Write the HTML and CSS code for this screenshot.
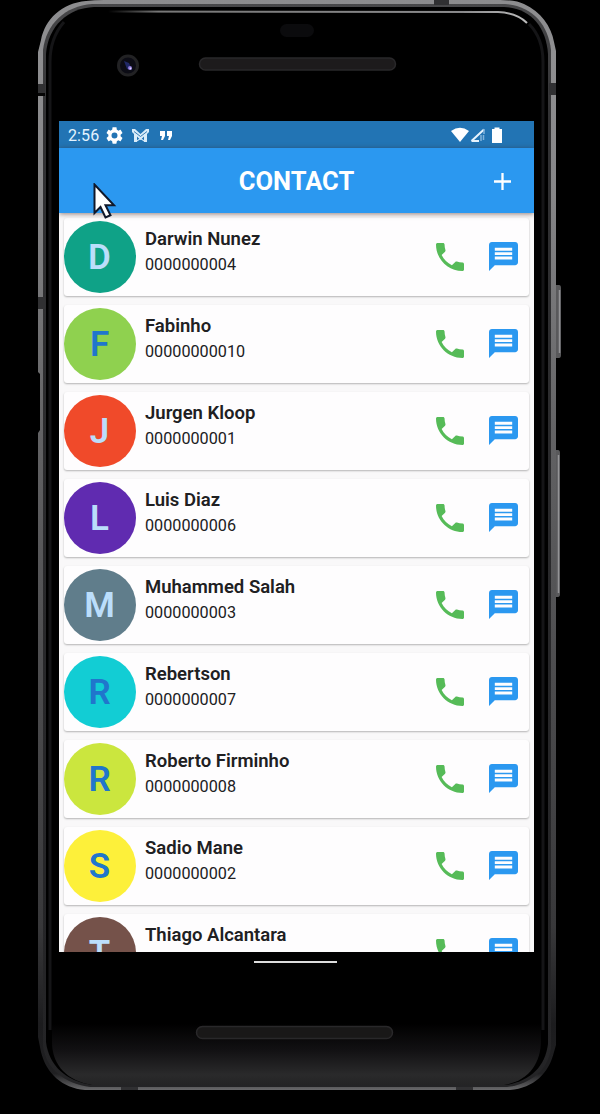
FILE: index.html
```html
<!DOCTYPE html>
<html lang="en">
<head>
<meta charset="utf-8">
<title>Contact</title>
<link rel="stylesheet" href="styles.css">
</head>
<body>
<svg class="sprites" width="0" height="0" aria-hidden="true">
  <symbol id="call" viewBox="3 3 18 18"><path d="M6.62 10.79c1.44 2.83 3.76 5.14 6.59 6.59l2.2-2.2c.27-.27.67-.36 1.02-.24 1.12.37 2.33.57 3.57.57.55 0 1 .45 1 1V20c0 .55-.45 1-1 1-9.39 0-17-7.61-17-17 0-.55.45-1 1-1h3.5c.55 0 1 .45 1 1 0 1.25.2 2.45.57 3.57.11.35.03.74-.25 1.02l-2.2 2.2z"/></symbol>
  <symbol id="message" viewBox="2 2 20 20"><path d="M20 2H4c-1.1 0-2 .9-2 2v18l4-4h14c1.1 0 2-.9 2-2V4c0-1.100-.9-2-2-2zm-2 12H6v-2h12v2zm0-3H6V9h12v2zm0-3H6V6h12v2z"/></symbol>
</svg>
<main class="phone">
  <svg class="frame" width="600" height="1114" viewBox="0 0 600 1114" aria-hidden="true">
    <defs>
      <linearGradient id="edge" x1="0" y1="0" x2="0" y2="1">
        <stop offset="0" stop-color="#8c8c8e"/><stop offset=".05" stop-color="#8f8f91"/><stop offset=".18" stop-color="#858587"/><stop offset=".4" stop-color="#626264"/><stop offset=".6" stop-color="#4e4e50"/><stop offset=".85" stop-color="#38383a"/><stop offset=".94" stop-color="#1c1c1e"/><stop offset=".985" stop-color="#202022"/><stop offset="1" stop-color="#68686a"/>
      </linearGradient>
      <linearGradient id="inner" x1="0" y1="0" x2="0" y2="1">
        <stop offset="0" stop-color="#48484a"/><stop offset=".1" stop-color="#323234"/><stop offset=".5" stop-color="#29292b"/><stop offset="1" stop-color="#242426"/>
      </linearGradient>
      <linearGradient id="chin" x1="0" y1="0" x2="0" y2="1">
        <stop offset="0" stop-color="#000"/><stop offset=".94" stop-color="#000"/><stop offset=".965" stop-color="#111012"/><stop offset=".99" stop-color="#2a2a2b"/><stop offset="1" stop-color="#242425"/>
      </linearGradient>
      <linearGradient id="shine" x1="0" y1="0" x2="1" y2="0">
        <stop offset="0" stop-color="#777" stop-opacity="0"/><stop offset=".12" stop-color="#777"/><stop offset=".85" stop-color="#8b8b8d"/><stop offset="1" stop-color="#bbb"/>
      </linearGradient>
    </defs>
    <path class="button" d="M555 285h4q2 0 2 3v67q0 3-2 3h-4zM554 450h4q2 0 2 3v141q0 3-2 3h-4z"/>
    <path class="button-light" d="M559.500 290v63M558.500 455v138"/>
    <path fill="url(#edge)" d="M38 52L41 40C45 19 62 3 86 1Q94 0 104 0H500Q516 0 524 4C541 12 551 26 554 42L556 51V1045L554 1052C549 1073 534 1088 510 1090H85C62 1088 46 1073 41 1052L38 1037V433L40 430V374L38 372Z"/>
    <path fill="url(#inner)" d="M43 50C46 24 65 6 92 4H505C532 6 548 24 551 50V1048C548 1070 531 1084 507 1087H90C65 1084 46 1069 43 1046Z"/>
    <path fill="#000" d="M46 54C48 26 68 8 94 7H504C530 8 546 26 548 54V1044C545 1067 530 1081 506 1085H92C66 1081 49 1066 46 1042Z"/>
    <path fill="none" stroke="#151517" stroke-width="3" d="M50 1030V62Q50 38 64 22M543 1030V62Q543 38 529 24"/>
    <path fill="url(#chin)" d="M52 60H541V1040C541 1064 528 1081 504 1085H92C68 1081 52 1066 52 1042Z"/>
    <path fill="none" stroke="url(#shine)" stroke-width="2" d="M108 11.500L498 12Q517 13 527 23"/>
    <path fill="#303032" d="M434 0h15v5h-15zM549 83h7v12h-7zM38 84h7v9h-7zM38 297h7v12h-7zM121 1087h17v3h-17zM456 1087h17v3h-17z"/>
    <path fill="#050505" d="M38 93h7v3h-7z"/>
    <rect x="280" y="24" width="34" height="13" rx="6.500" fill="#0b0b0d"/>
    <rect x="199.500" y="58" width="196" height="12" rx="6" fill="#1d1b1c" stroke="#29282a" stroke-width="1.500"/>
    <rect x="196.500" y="1026.500" width="196" height="12" rx="6" fill="#191818" stroke="#29282a" stroke-width="1.500"/>
    <circle cx="128" cy="65.500" r="9.500" fill="#0c0c15" stroke="#222224" stroke-width="3"/>
    <path d="M124 61l5 2 3 7-5-1z" fill="#202866"/><circle cx="130" cy="68" r="2" fill="#8c78d8"/><circle cx="130.500" cy="68.500" r=".9" fill="#e4d6ff"/>
  </svg>

  <section class="screen">
    <header class="status">
      <span class="time">2:56</span>
      <svg class="gear" width="17" height="17" viewBox="2 2 20 20"><path d="M19.140 12.940c.04-.3.06-.61.06-.94s-.02-.64-.07-.94l2.030-1.580c.18-.14.23-.41.12-.61l-1.920-3.320c-.12-.22-.37-.29-.59-.22l-2.390.96c-.5-.38-1.030-.7-1.620-.94l-.36-2.540c-.04-.24-.24-.41-.48-.41h-3.840c-.24 0-.43.17-.47.41l-.36 2.540c-.59.24-1.130.57-1.620.94l-2.390-.96c-.22-.08-.47 0-.59.22L2.740 8.870c-.12.21-.08.47.12.61l2.030 1.580c-.05.3-.09.63-.09.94s.02.64.07.94l-2.030 1.580c-.18.14-.23.41-.12.61l1.920 3.320c.12.22.37.29.59.22l2.390-.96c.5.38 1.030.7 1.620.94l.36 2.540c.05.24.24.41.48.41h3.840c.24 0 .44-.17.47-.41l.36-2.540c.59-.24 1.130-.56 1.620-.94l2.390.96c.22.08.47 0 .59-.22l1.920-3.320c.12-.22.07-.47-.12-.61zM12 15.500a3.500 3.500 0 1 1 0-7 3.500 3.500 0 0 1 0 7z"/></svg>
      <svg class="mail" width="17" height="15" viewBox="0 0 17 15"><path d="M0 1h3l5.500 5L14 1h3v3l-2 2v8h-3V8.500L8.500 12 5 8.500V14H2V6L0 4z"/><path class="mail-fold" d="M2 3.500l6.500 5 6.500-5"/><path d="M5 13.500v-1.200l3.500-2.600 3.500 2.600v1.200l-3.500-2.300z"/></svg>
      <svg class="quote" width="12" height="9" viewBox="0 0 12 9"><path d="M0 0h5v5L3 9H1l1-4H0zM7 0h5v5l-2 4H8l1-4H7z"/></svg>
      <svg class="signals" width="52" height="17" viewBox="0 0 52 17"><path d="M0 4Q9-2.500 18 4L9 15z"/><path class="cell" d="M20.500 14L33 2.500M20.500 14H28"/><path class="cell-dim" d="M33 2v5M32.500 8v5M30 14v-6"/><path d="M41 2h2.500V0.500h5V2H51v14H41z"/></svg>
    </header>
    <div class="appbar">
      <h1 class="title">CONTACT</h1>
      <svg class="add" width="17" height="17" viewBox="0 0 17 17"><path d="M8.500 0v17M0 8.500h17"/></svg>
    </div>
    <ul class="contacts">
      <li class="card"><span class="avatar teal">D</span><div class="info"><b class="name">Darwin Nunez</b><span class="number">0000000004</span></div><svg class="call"><use href="#call"/></svg><svg class="message"><use href="#message"/></svg></li>
      <li class="card"><span class="avatar lime dark">F</span><div class="info"><b class="name">Fabinho</b><span class="number">00000000010</span></div><svg class="call"><use href="#call"/></svg><svg class="message"><use href="#message"/></svg></li>
      <li class="card"><span class="avatar orange">J</span><div class="info"><b class="name">Jurgen Kloop</b><span class="number">0000000001</span></div><svg class="call"><use href="#call"/></svg><svg class="message"><use href="#message"/></svg></li>
      <li class="card"><span class="avatar purple">L</span><div class="info"><b class="name">Luis Diaz</b><span class="number">0000000006</span></div><svg class="call"><use href="#call"/></svg><svg class="message"><use href="#message"/></svg></li>
      <li class="card"><span class="avatar slate">M</span><div class="info"><b class="name">Muhammed Salah</b><span class="number">0000000003</span></div><svg class="call"><use href="#call"/></svg><svg class="message"><use href="#message"/></svg></li>
      <li class="card"><span class="avatar cyan dark">R</span><div class="info"><b class="name">Rebertson</b><span class="number">0000000007</span></div><svg class="call"><use href="#call"/></svg><svg class="message"><use href="#message"/></svg></li>
      <li class="card"><span class="avatar citron dark">R</span><div class="info"><b class="name">Roberto Firminho</b><span class="number">0000000008</span></div><svg class="call"><use href="#call"/></svg><svg class="message"><use href="#message"/></svg></li>
      <li class="card"><span class="avatar yellow dark">S</span><div class="info"><b class="name">Sadio Mane</b><span class="number">0000000002</span></div><svg class="call"><use href="#call"/></svg><svg class="message"><use href="#message"/></svg></li>
      <li class="card"><span class="avatar brown">T</span><div class="info"><b class="name">Thiago Alcantara</b></div><svg class="call"><use href="#call"/></svg><svg class="message"><use href="#message"/></svg></li>
    </ul>
  </section>
  <div class="home"></div>
  <svg class="cursor" width="24" height="37" viewBox="0 0 24 37"><path d="M1.500 1.500V30l6-6 5 10.500 5-2.300-5-10h8.500z"/></svg>
</main>
</body>
</html>
```
FILE: styles.css
```css
* { box-sizing: border-box; }
body {
  margin: 0;
  background: #000;
  font-family: Roboto, "Liberation Sans", sans-serif;
}
.sprites { position: absolute; }
.phone {
  position: relative;
  width: 600px;
  height: 1114px;
  padding: 121px 66px 0 59px;
  overflow: hidden;
}
.frame { position: absolute; inset: 0; }
.button { fill: #59595b; }
.button-light { stroke: #949496; stroke-width: 1.5; }
.screen {
  position: relative;
  display: flex;
  flex-direction: column;
  height: 831px;
  overflow: hidden;
  background: #f9f8f9;
}
.status {
  display: flex;
  align-items: center;
  flex: none;
  height: 27px;
  padding: 1px 31px 0 9px;
  background: #2274b4;
  fill: #fff;
}
.time {
  width: 38px;
  color: #e4f3ff;
  font-size: 16px;
  letter-spacing: 0.1px;
}
.mail { margin-left: 9px; fill: #d9ecfa; }
.mail-fold { fill: none; stroke: #3a7fb6; stroke-width: 1; }
.quote { margin-left: 11px; }
.signals { margin-left: auto; }
.cell { fill: none; stroke: #e6f3fd; stroke-width: 2; }
.cell-dim { fill: none; stroke: #80b3dc; stroke-width: 1.5; }
.appbar {
  position: relative;
  display: flex;
  align-items: center;
  justify-content: center;
  flex: none;
  height: 65px;
  background: #2b98f0;
  box-shadow: 0 1px 5px rgba(60, 30, 20, 0.55);
  z-index: 1;
}
.title {
  margin: 0;
  color: #fff;
  font-size: 25.5px;
  font-weight: 700;
  line-height: 30px;
}
.add {
  position: absolute;
  right: 23px;
  top: 25px;
  stroke: #fff;
  stroke-width: 2.3;
}
.contacts {
  display: flex;
  flex-direction: column;
  gap: 9px;
  margin: 0;
  padding: 5px 5px 0;
  list-style: none;
}
.card {
  display: flex;
  align-items: center;
  flex: none;
  height: 78px;
  padding-right: 11px;
  border-radius: 3px;
  background: #fefdfe;
  box-shadow: 0 1px 2px rgba(0, 0, 0, 0.28);
}
.avatar {
  display: flex;
  align-items: center;
  justify-content: center;
  width: 72px;
  height: 72px;
  padding: 1px 1px 0 0;
  border-radius: 50%;
  color: #bbdefb;
  font-size: 35px;
  font-weight: 600;
  line-height: 40px;
}
.dark { color: #2076cc; }
.teal { background: #0fa287; }
.lime { background: #8fd14f; }
.orange { background: #f04a2a; }
.purple { background: #602bb0; }
.slate { background: #607d8b; }
.cyan { background: #12cdd4; }
.citron { background: #cbe63e; }
.yellow { background: #fdf03a; }
.brown { background: #75524a; }
.info {
  display: flex;
  flex: 1;
  flex-direction: column;
  align-self: flex-start;
  gap: 2px;
  padding: 9px 0 0 9px;
  color: #202022;
}
.name { font-size: 18.5px; font-weight: 600; line-height: 24px; }
.number { font-size: 16.2px; line-height: 23px; }
.call { width: 28px; height: 28px; margin-right: 25px; fill: #56bb58; }
.message { width: 29px; height: 29px; margin-bottom: 2px; fill: #2b98f0; }
.home {
  width: 83px;
  height: 2px;
  margin: 9px 0 0 195px;
  position: relative;
  background: #ddd;
}
.cursor {
  position: absolute;
  left: 93px;
  top: 183px;
  z-index: 2;
  fill: #fff;
  stroke: #10182a;
  stroke-width: 2;
}
```
